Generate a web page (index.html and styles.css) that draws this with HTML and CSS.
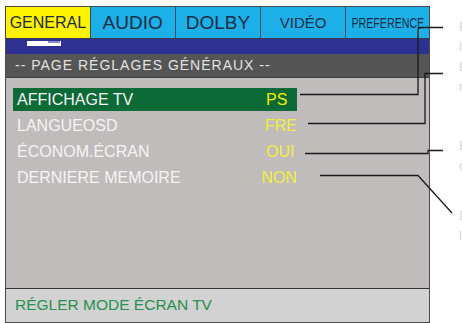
FILE: index.html
```html
<!DOCTYPE html>
<html lang="fr">
<head>
    <meta charset="UTF-8">
    <title>Réglages généraux</title>
    <link rel="stylesheet" href="styles.css">
</head>
<body>
    <div class="page">
        <div class="screen">
            <!-- Onglets -->
            <div class="tabs">
                <div class="tab tab-general active">GENERAL</div>
                <div class="tab tab-audio">AUDIO</div>
                <div class="tab tab-dolby">DOLBY</div>
                <div class="tab tab-video">VIDÉO</div>
                <div class="tab tab-pref"><span class="narrow">PREFERENCE</span></div>
            </div>

            <div class="band">
                <svg class="band-icon" width="36" height="6" viewBox="0 0 36 6">
                    <rect x="0" y="0" width="34" height="5" fill="#ffffff"/>
                    <rect x="21" y="0" width="12" height="2" fill="#8c8fc4"/>
                </svg>
            </div>

            <div class="header">-- PAGE RÉGLAGES GÉNÉRAUX --</div>

            <div class="menu">
                <div class="row selected">
                    <span class="label">AFFICHAGE TV</span>
                    <span class="value">PS</span>
                </div>
                <div class="row">
                    <span class="label">LANGUEOSD</span>
                    <span class="value">FRE</span>
                </div>
                <div class="row">
                    <span class="label">ÉCONOM.ÉCRAN</span>
                    <span class="value">OUI</span>
                </div>
                <div class="row">
                    <span class="label">DERNIERE MEMOIRE</span>
                    <span class="value">NON</span>
                </div>
            </div>

            <div class="footer">RÉGLER MODE ÉCRAN TV</div>
        </div>

        <!-- Légendes coupées à droite -->
        <div class="notes">
            <div class="note note-1">Réglage de<br>l'écran TV</div>
            <div class="note note-2">Langue du<br>menu OSD</div>
            <div class="note note-3">Economiseur<br>d'écran</div>
            <div class="note note-4">Dernière<br>lecture</div>
        </div>

        <svg class="callouts" width="462" height="323" viewBox="0 0 462 323">
            <g fill="none" stroke="#1a1a1a" stroke-width="1.3">
                <path d="M300 94.5 H418 V30 Q418 27.5 421 27.5 H443"/>
                <path d="M308 123.5 H425 V73.5 H443"/>
                <path d="M305 153.5 H428 V150.5 H443"/>
                <path d="M320 175.5 H418 L452 213"/>
            </g>
        </svg>
    </div>
</body>
</html>
```

FILE: styles.css
```css
body {
    margin: 0;
    background: #ffffff;
    font-family: 'Liberation Sans', Arial, sans-serif;
    overflow: hidden;
}

.page {
    position: relative;
    width: 462px;
    height: 323px;
    padding: 6px 0 0 5px;
    box-sizing: border-box;
    overflow: hidden;
}

.screen {
    width: 423px;
    border: 1px solid #4a4a4a;
    background: #c0bcbb;
}

.tabs {
    display: flex;
    height: 31px;
    border-bottom: 1px solid #3a3a4a;
    background: #1db0e8;
}

.tab {
    display: flex;
    align-items: center;
    justify-content: center;
    color: #1b2c44;
    border-left: 1px solid #2a4a66;
    font-size: 19px;
}

.tab-general {
    width: 84px;
    border-left: none;
    font-size: 16px;
}

.tab-audio { width: 84px; }
.tab-dolby { width: 85px; }
.tab-video { width: 84px; font-size: 15px; }
.tab-pref { width: 83px; }

.tab.active {
    background: #fff200;
}

.narrow {
    display: inline-block;
    font-size: 14px;
    transform: scaleX(0.76);
    white-space: nowrap;
}

.band {
    height: 15px;
    background: #2e3192;
    padding: 2px 0 0 21px;
    box-sizing: border-box;
}

.band-icon {
    display: block;
}

.header {
    height: 23px;
    line-height: 23px;
    background: #555555;
    color: #e2e2e2;
    font-size: 14px;
    letter-spacing: 1px;
    padding-left: 9px;
    border-bottom: 1px solid #3e3e3e;
}

.menu {
    height: 210px;
    padding: 10px 0 0 7px;
    box-sizing: border-box;
    display: flex;
    flex-direction: column;
    gap: 3px;
}

.row {
    display: flex;
    align-items: center;
    width: 284px;
    height: 23px;
    padding-left: 4px;
    box-sizing: border-box;
    font-size: 16px;
}

.row .label {
    width: 249px;
    color: #f4f4f4;
}

.row .value {
    color: #f2ef3c;
}

.row.selected {
    background: #0b6a36;
}

.row.selected .value {
    color: #f4f000;
}

.footer {
    height: 33px;
    line-height: 31px;
    border-top: 1px solid #333333;
    background: #d2d2d2;
    color: #259050;
    font-size: 15.5px;
    padding-left: 9px;
}

.notes {
    position: absolute;
    left: 459px;
    top: 0;
}

.note {
    position: absolute;
    left: 0;
    white-space: nowrap;
    color: #d6d6d6;
    font-size: 13px;
    line-height: 20px;
}

.note-1 { top: 17px; }
.note-2 { top: 57px; }
.note-3 { top: 136px; }
.note-4 { top: 206px; }

.callouts {
    position: absolute;
    left: 0;
    top: 0;
}
```
